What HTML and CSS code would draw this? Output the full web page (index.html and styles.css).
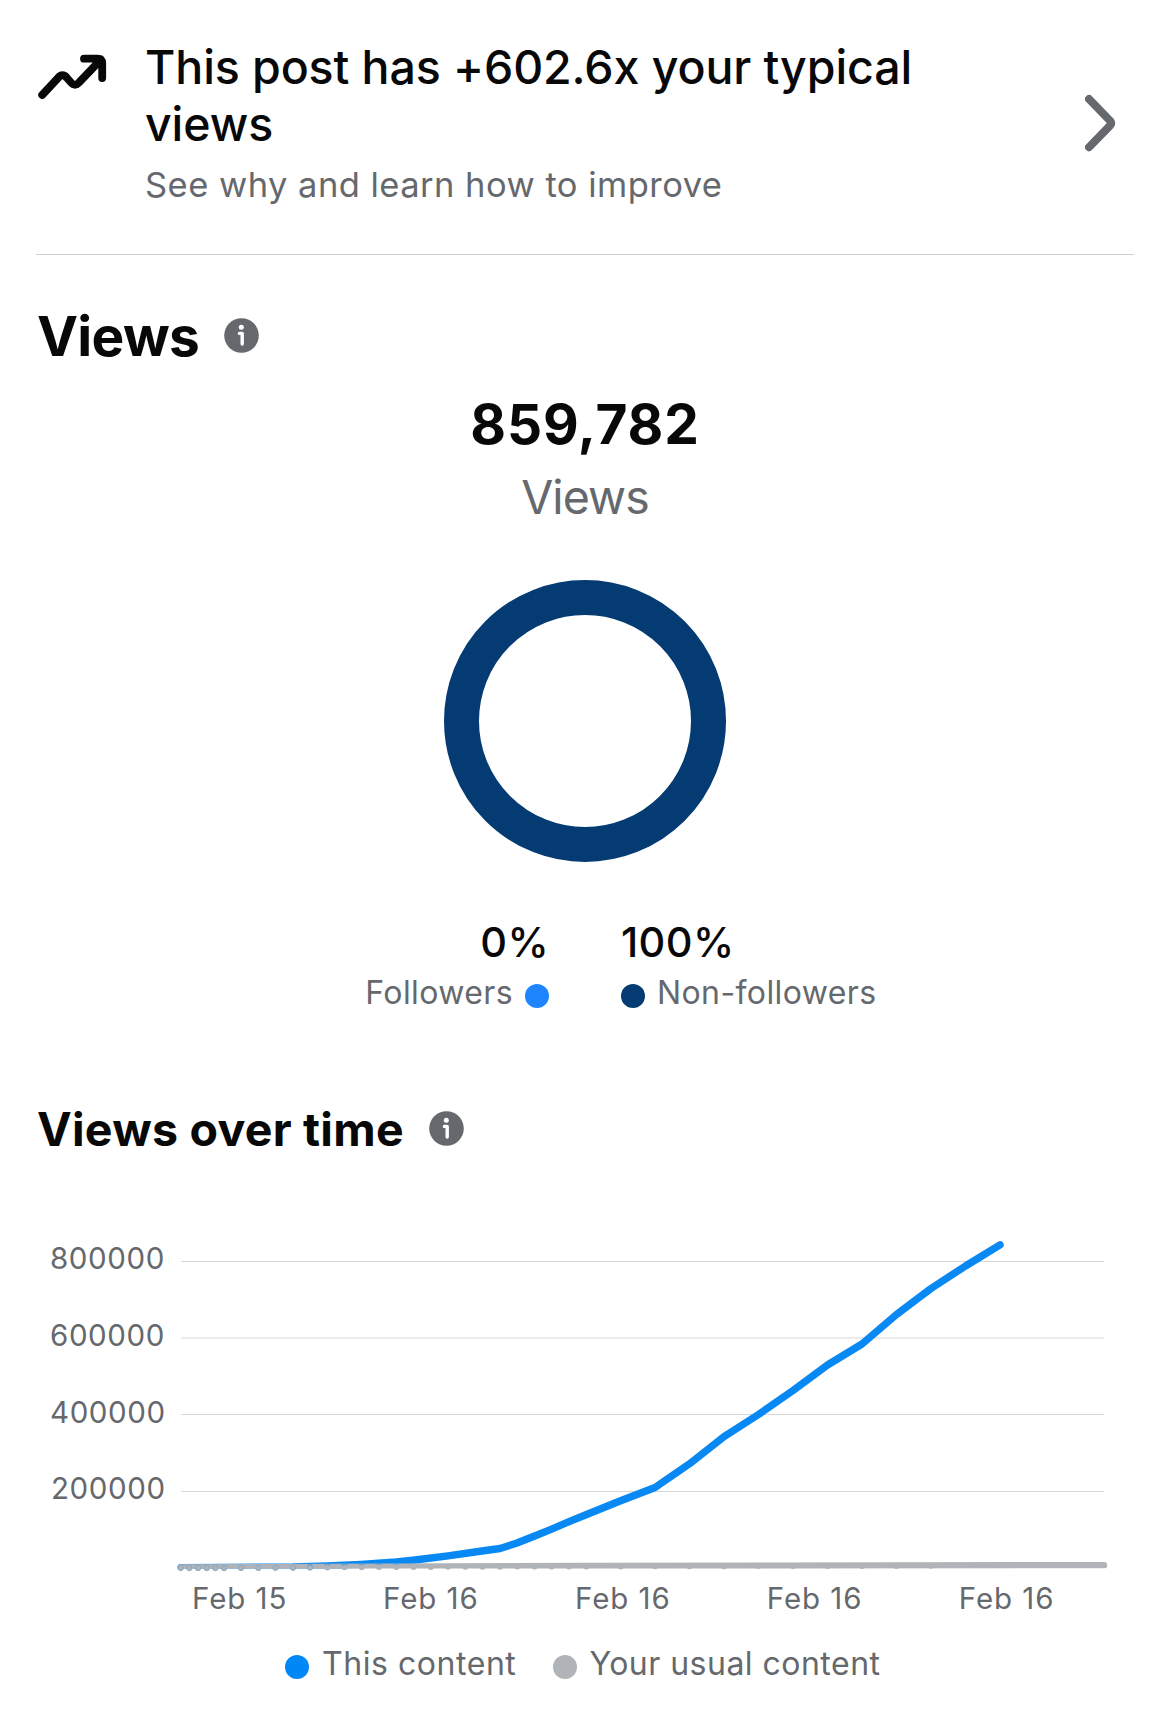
FILE: index.html
```html
<!DOCTYPE html>
<html lang="en">
    <head>
        <meta charset="utf-8">
        <meta name="viewport" content="width=device-width, initial-scale=1">
        <title>Post insights</title>
        <link rel="stylesheet" href="styles.css">
    </head>
    <body>
        <a class="banner">
            <svg class="trend-icon" viewBox="0 0 72 48">
                <path d="M6.2 41 L22 24 Q26.5 18.5 31 24 L35 28.5 Q39 33 43 28.5 L65 5.5 M48 4.7 H61.5 Q66.2 4.7 66.2 9.4 V24"/>
                <path class="trend-tip" d="M56 5 H66 V15 Z"/>
            </svg>
            <div class="banner-text">
                <h1>This post has +602.6x your typical views</h1>
                <p>See why and learn how to improve</p>
            </div>
            <svg class="chevron" viewBox="0 0 32 58">
                <path d="M4 5 L25 26.7 Q27.6 29.2 25 31.7 L4 53.2"/>
            </svg>
        </a>

        <div class="heading">
            <h2>Views</h2>
            <svg class="info" viewBox="0 0 35 35">
                <circle class="info-bg" cx="17.5" cy="17.5" r="17.3"/>
                <circle class="info-dot" cx="17.3" cy="9.2" r="2.5"/>
                <path d="M15.4 15.4 H18.2 V26"/>
            </svg>
        </div>

        <div class="total">
            <div class="total-number">859,782</div>
            <div class="total-label">Views</div>
        </div>
        <div class="donut"></div>
        <div class="split">
            <div class="split-item followers">
                <div class="percent">0%</div>
                <div class="split-label"><span>Followers</span><i class="dot light-blue"></i></div>
            </div>
            <div class="split-item">
                <div class="percent">100%</div>
                <div class="split-label"><i class="dot navy"></i><span>Non-followers</span></div>
            </div>
        </div>

        <div class="heading small">
            <h3>Views over time</h3>
            <svg class="info" viewBox="0 0 35 35">
                <circle class="info-bg" cx="17.5" cy="17.5" r="17.3"/>
                <circle class="info-dot" cx="17.3" cy="9.2" r="2.5"/>
                <path d="M15.4 15.4 H18.2 V26"/>
            </svg>
        </div>

        <svg class="chart" viewBox="0 1200 1170 425">
            <defs>
                <clipPath id="plot"><rect x="176" y="1200" width="940" height="368.6"/></clipPath>
            </defs>
            <g class="grid">
                <path d="M181 1261.5 H1104"/>
                <path d="M181 1338 H1104"/>
                <path d="M181 1414.5 H1104"/>
                <path d="M181 1491.5 H1104"/>
            </g>
            <g class="y-labels">
                <text x="50" y="1269.3">800000</text>
                <text x="50" y="1346">600000</text>
                <text x="50" y="1422.5">400000</text>
                <text x="51" y="1499.3">200000</text>
            </g>
            <g clip-path="url(#plot)">
                <polyline class="line this" points="181,1567.6 224,1567.5 293,1567 327,1566 361,1564.4 396,1562 413,1560.2 448,1555.8 482,1551 500,1548.5 517,1543 534,1536.3 551,1529.3 569,1521.7 586,1514.8 620,1501 655,1487.5 689.5,1463.8 724,1436.7 758.5,1414.5 793,1390.5 827.5,1365 862,1344 896.5,1314.5 931,1288.5 965.5,1266 1000,1244.8"/>
                <polyline class="line usual" points="181,1567.4 586,1566 1104,1565.2"/>
            </g>
            <g class="points">
                <circle cx="180.7" cy="1568" r="2.7"/>
                <circle cx="189.3" cy="1568" r="2.7"/>
                <circle cx="198" cy="1568" r="2.7"/>
                <circle cx="206.7" cy="1568" r="2.7"/>
                <circle cx="215.3" cy="1568" r="2.7"/>
                <circle cx="224" cy="1568" r="2.7"/>
                <circle cx="241" cy="1567.9" r="2.7"/>
                <circle cx="258.3" cy="1567.9" r="2.7"/>
                <circle cx="275.5" cy="1567.8" r="2.7"/>
                <circle cx="293" cy="1567.7" r="2.7"/>
                <circle cx="310" cy="1567.5" r="2.7"/>
            </g>
            <g class="points faded">
                <circle cx="327.3" cy="1567.4" r="3"/>
                <circle cx="344.5" cy="1567.3" r="3"/>
                <circle cx="361.8" cy="1567.2" r="3"/>
                <circle cx="379" cy="1567.1" r="3"/>
                <circle cx="396.3" cy="1567" r="3"/>
                <circle cx="413.5" cy="1567" r="3"/>
                <circle cx="430.8" cy="1566.9" r="3"/>
                <circle cx="448" cy="1566.8" r="3"/>
                <circle cx="465.3" cy="1566.8" r="3"/>
                <circle cx="482.5" cy="1566.7" r="3"/>
                <circle cx="500" cy="1566.7" r="3"/>
                <circle cx="517.3" cy="1566.6" r="3"/>
                <circle cx="534.5" cy="1566.6" r="3"/>
                <circle cx="551.7" cy="1566.5" r="3"/>
                <circle cx="569" cy="1566.5" r="3"/>
                <circle cx="586.3" cy="1566.4" r="3"/>
                <circle cx="620.7" cy="1566.4" r="3"/>
                <circle cx="655" cy="1566.3" r="3"/>
                <circle cx="689.5" cy="1566.2" r="3"/>
                <circle cx="724" cy="1566.2" r="3"/>
                <circle cx="758.5" cy="1566.1" r="3"/>
                <circle cx="793" cy="1566.1" r="3"/>
                <circle cx="827.5" cy="1566" r="3"/>
                <circle cx="862" cy="1565.9" r="3"/>
                <circle cx="896.5" cy="1565.9" r="3"/>
                <circle cx="931" cy="1565.8" r="3"/>
            </g>
            <!-- blue points showing just above the grey line -->
            <path class="peek" d="M307.5 1566 q2.5 -3 5 0 M324.8 1565.5 q2.5 -3 5 0 M342 1565.3 q2.5 -2.5 5 0 M359.3 1565 q2.5 -2 5 0 M376.5 1564.2 h5 M393.8 1563.8 h5"/>
            <g class="x-labels">
                <text x="192" y="1609">Feb 15</text>
                <text x="383" y="1609">Feb 16</text>
                <text x="575" y="1609">Feb 16</text>
                <text x="766.7" y="1609">Feb 16</text>
                <text x="958.7" y="1609">Feb 16</text>
            </g>
        </svg>

        <div class="legend">
            <div class="legend-item"><i class="dot blue"></i><span>This content</span></div>
            <div class="legend-item"><i class="dot grey"></i><span>Your usual content</span></div>
        </div>
    </body>
</html>
```

FILE: styles.css
```css
* {
    box-sizing: border-box;
}
body, html {
    padding: 0;
    margin: 0;
    background: #fff;
    color: #080809;
    font-family: Inter, "Liberation Sans", sans-serif;
}
h1, h2, h3, p {
    margin: 0;
}
svg {
    display: block;
    flex: none;
}
.banner {
    display: flex;
    height: 255px;
    margin: 0 36px;
    padding-top: 39px;
    border-bottom: 1px solid #ced0d4;
}
.trend-icon {
    width: 72px;
    height: 48px;
    margin-top: 15px;
    fill: none;
    stroke: #080809;
    stroke-width: 7.8;
    stroke-linecap: round;
    stroke-linejoin: round;
}
.trend-tip {
    fill: #080809;
    stroke: none;
}
.banner-text {
    width: 880px;
    margin-left: 37px;
}
.banner h1 {
    width: 800px;
    font-size: 46.5px;
    line-height: 57px;
    font-weight: 500;
    letter-spacing: -0.1px;
}
.banner p {
    margin-top: 11px;
    font-size: 34.5px;
    line-height: 42px;
    letter-spacing: 0.47px;
    color: #65686c;
}
.chevron {
    width: 32px;
    height: 58px;
    margin-top: 55px;
    margin-left: 60px;
    fill: none;
    stroke: #65686c;
    stroke-width: 8;
    stroke-linecap: round;
}
.heading {
    display: flex;
    align-items: center;
    height: 66px;
    margin-top: 48px;
    padding-left: 37px;
}
.heading h2 {
    font-size: 55px;
    line-height: 66px;
    font-weight: 700;
    letter-spacing: -0.7px;
}
.heading .info {
    margin-left: 25px;
    margin-bottom: 2px;
}
.heading.small {
    height: 56px;
    margin-top: 89px;
}
.heading h3 {
    font-size: 46.5px;
    line-height: 56px;
    font-weight: 700;
    letter-spacing: 0.25px;
}
.info {
    width: 35px;
    height: 35px;
}
.info-bg {
    fill: #65686c;
}
.info-dot {
    fill: #fff;
}
.info path {
    fill: none;
    stroke: #fff;
    stroke-width: 3.4;
    stroke-linecap: round;
    stroke-linejoin: round;
}
.total {
    margin-top: 22px;
    text-align: center;
}
.total-number {
    font-size: 55px;
    line-height: 66px;
    font-weight: 700;
    letter-spacing: 0.8px;
}
.total-label {
    margin-top: 12px;
    font-size: 46.5px;
    line-height: 56px;
    letter-spacing: -0.9px;
    color: #65686c;
}
.donut {
    width: 282px;
    height: 282px;
    margin: 55px auto 0;
    border: 35px solid #043b72;
    border-radius: 50%;
}
.split {
    display: grid;
    grid-template-columns: 1fr 1fr;
    gap: 72px;
    margin-top: 55px;
}
.percent {
    font-size: 41.5px;
    line-height: 50px;
    font-weight: 500;
    letter-spacing: 0.4px;
}
.followers .percent {
    text-align: right;
}
.split-label {
    display: flex;
    align-items: center;
    gap: 12px;
    margin-top: 7px;
    font-size: 32px;
    line-height: 38px;
    letter-spacing: 0.4px;
    color: #65686c;
}
.followers .split-label {
    justify-content: flex-end;
}
.dot {
    width: 24px;
    height: 24px;
    margin-top: 6px;
    border-radius: 50%;
}
.light-blue {
    background: #1f85ff;
}
.navy {
    background: #043b72;
}
.blue {
    background: #0088f7;
}
.grey {
    background: #b0b3b8;
}
.chart {
    width: 1170px;
    height: 425px;
    margin-top: 43px;
}
.grid path {
    stroke: #d5d7da;
    stroke-width: 1;
}
.y-labels, .x-labels {
    font-size: 29.5px;
    letter-spacing: 0.6px;
    fill: #65686c;
}
.x-labels {
    letter-spacing: 0.95px;
}
.line {
    fill: none;
    stroke-width: 6.5;
    stroke-linecap: round;
    stroke-linejoin: round;
}
.this {
    stroke: #0788f2;
    stroke-width: 7.4;
}
.usual {
    stroke: #b0b3b8;
}
.points circle {
    fill: #b0b3b8;
    stroke: #86abc8;
    stroke-width: 1;
}
.points.faded circle {
    stroke: none;
}
.peek {
    fill: none;
    stroke: #4f9fdc;
    stroke-width: 1.2;
}
.legend {
    display: flex;
    gap: 37px;
    margin-top: 20px;
    padding-left: 285px;
    font-size: 32px;
    line-height: 38px;
    letter-spacing: 0.55px;
    color: #65686c;
}
.legend-item {
    display: flex;
    align-items: center;
    gap: 13px;
}
.legend-item + .legend-item {
    gap: 12px;
    letter-spacing: 0.48px;
}
```
